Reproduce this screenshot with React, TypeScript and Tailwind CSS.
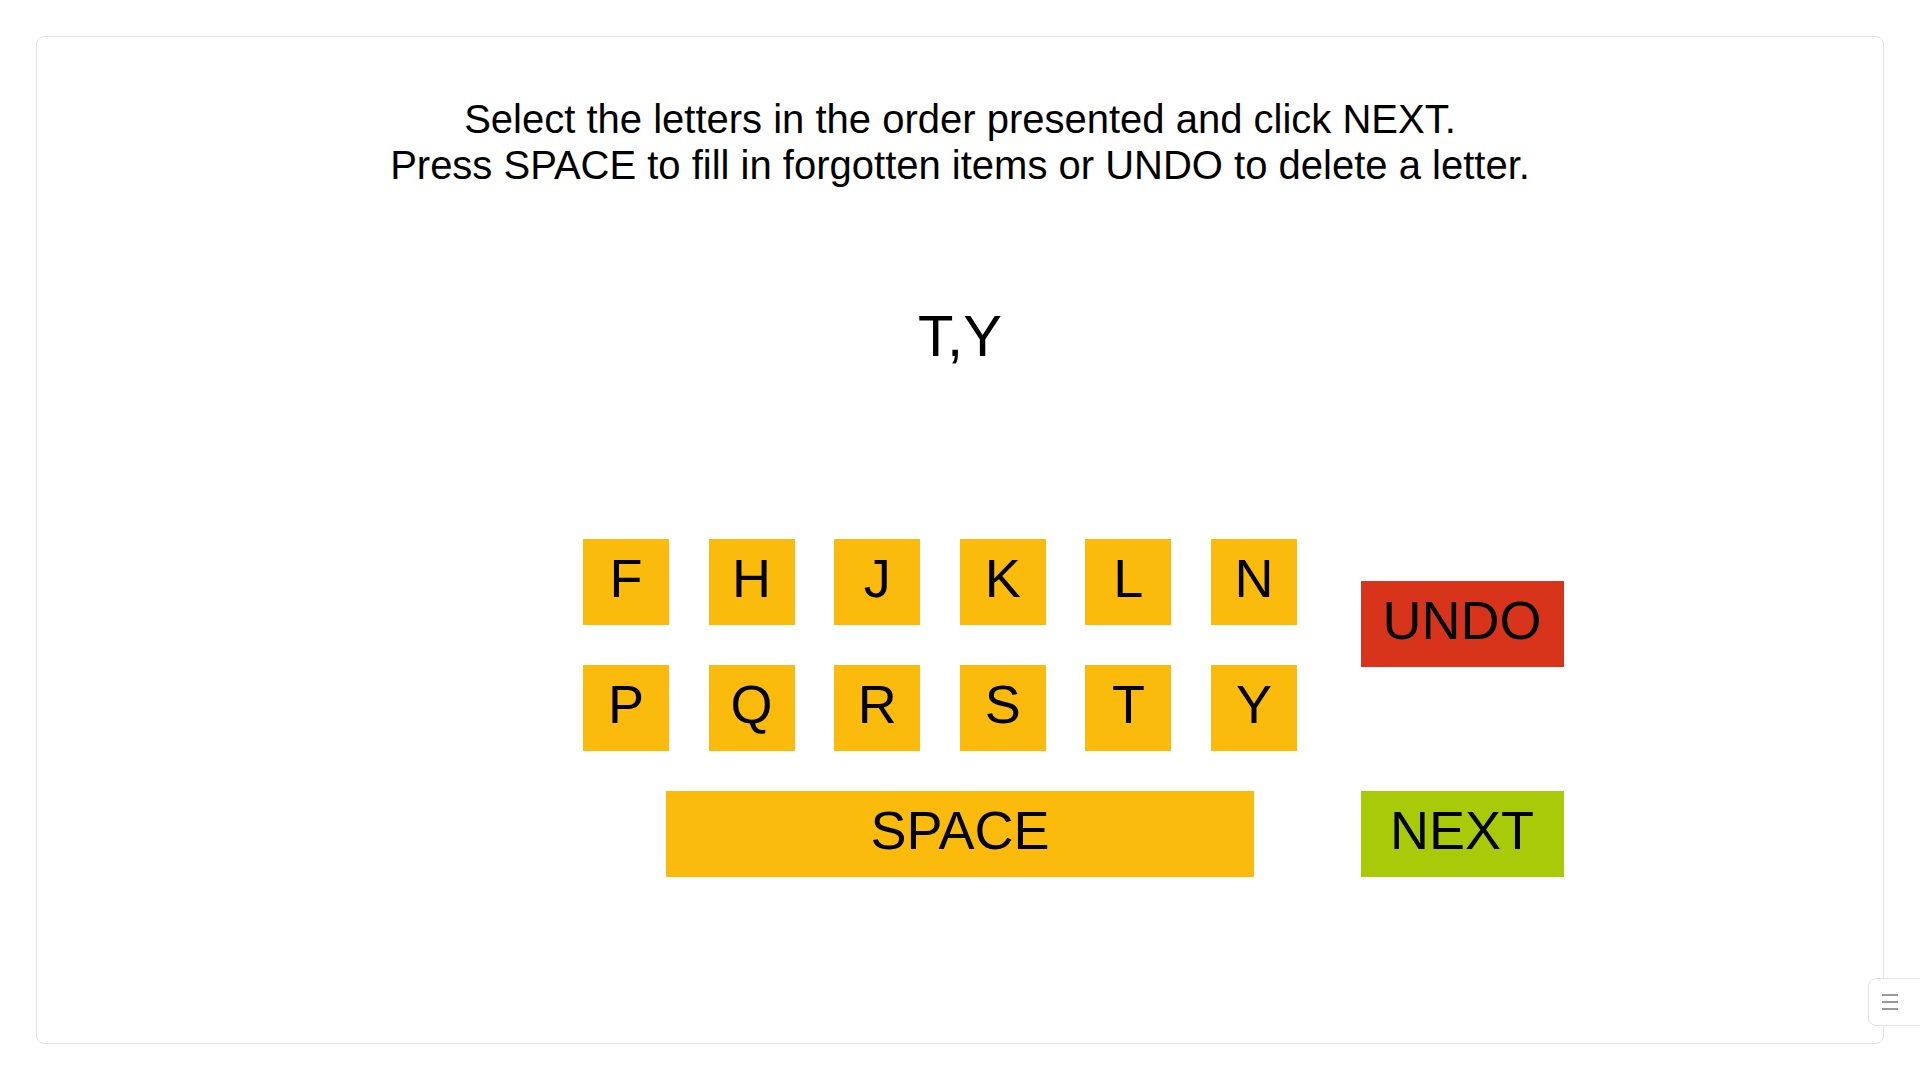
import React from 'react';

const ROW1 = ['F', 'H', 'J', 'K', 'L', 'N'];
const ROW2 = ['P', 'Q', 'R', 'S', 'T', 'Y'];

const Key = ({ label }: { label: string }) => (
  <button className="w-[86px] h-[86px] bg-[#fbbb0c] flex items-center justify-center pb-[9px] text-[54px] leading-none text-black">
    {label}
  </button>
);

export default function App() {
  return (
    <div
      className="w-[1920px] h-[1080px] bg-white p-[36px] relative overflow-hidden"
      style={{ fontFamily: '"Liberation Sans", Arial, sans-serif' }}
    >
      <div className="w-full h-full border border-[#e4e4e4] rounded-[8px] flex flex-col items-center pt-[59px]">
        <div className="text-[40px] leading-[46px] text-black text-center">
          <p>Select the letters in the order presented and click NEXT.</p>
          <p>Press SPACE to fill in forgotten items or UNDO to delete a letter.</p>
        </div>

        <div className="mt-[115px] text-[58px] leading-[66px] text-black">T,Y</div>

        <div className="self-start ml-[546px] mt-[170px] grid grid-cols-[86px_86px_86px_86px_86px_86px_227px] gap-x-[39.6px] gap-y-[40px]">
          {ROW1.map((l) => (
            <Key key={l} label={l} />
          ))}
          <div className="row-span-2 justify-self-end">
            <button className="mt-[42px] w-[203px] h-[86px] bg-[#d7341b] flex items-center justify-center pb-[9px] text-[54px] leading-none text-black">
              UNDO
            </button>
          </div>
          {ROW2.map((l) => (
            <Key key={l} label={l} />
          ))}
          <div className="col-span-6">
            <button className="ml-[83px] w-[588px] h-[86px] bg-[#fbbb0c] flex items-center justify-center pb-[9px] text-[54px] leading-none text-black">
              SPACE
            </button>
          </div>
          <div className="justify-self-end">
            <button className="w-[203px] h-[86px] bg-[#a8ca09] flex items-center justify-center pb-[9px] text-[54px] leading-none text-black">
              NEXT
            </button>
          </div>
        </div>
      </div>

      <button className="absolute right-[-8px] top-[978px] w-[60px] h-[48px] bg-white border border-[#e2e2e2] rounded-[8px] flex flex-col items-start justify-center gap-[5px] pl-[13px]">
        <span className="block w-[16px] h-[2px] bg-[#999999]" />
        <span className="block w-[16px] h-[2px] bg-[#999999]" />
        <span className="block w-[16px] h-[2px] bg-[#999999]" />
      </button>
    </div>
  );
}
